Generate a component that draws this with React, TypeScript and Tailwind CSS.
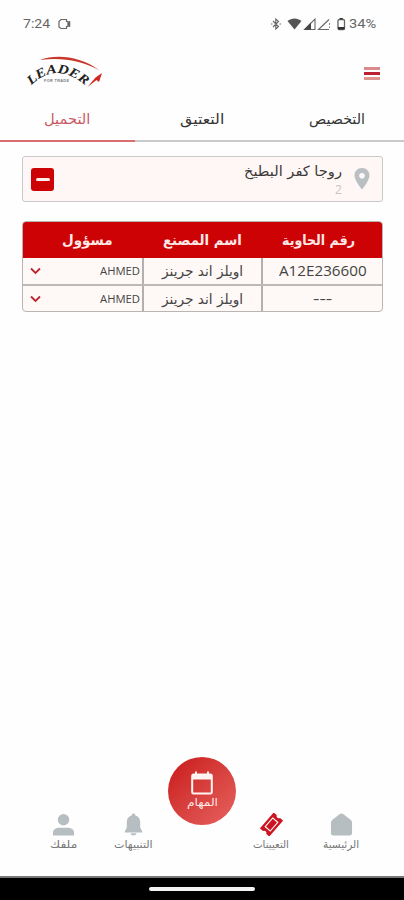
import { useLayoutEffect, useRef, useState } from "react";
import type { ReactNode } from "react";

/** One line of text, condensed or stretched to a fixed width. */
function Fit({ width, className = "", children }: { width: number; className?: string; children: ReactNode }) {
  const ref = useRef<HTMLSpanElement>(null);
  const [scale, setScale] = useState(1);
  useLayoutEffect(() => {
    if (ref.current) setScale(width / ref.current.offsetWidth);
  }, [width]);
  return (
    <span dir="ltr" className={`flex shrink-0 justify-start whitespace-nowrap ${className}`} style={{ width }}>
      <span ref={ref} dir="auto" className="block shrink-0 origin-left" style={{ transform: `scaleX(${scale})` }}>
        {children}
      </span>
    </span>
  );
}

function StatusBar() {
  return (
    <div className="flex h-12 items-center justify-between pl-[23px] pr-[28px] text-[#666]">
      <div className="flex items-center gap-[8px]">
        <Fit width={27} className="font-['Roboto',sans-serif] text-[13px] leading-4">7:24</Fit>
        <svg width="14" height="12" viewBox="0 0 14 12" fill="none" stroke="currentColor" strokeWidth="1.2">
          <path d="M3 1.500h5.500v2H10v5H8.500v2H3L1 9V3.500z" />
          <path d="M10 4.500l2-1.500v6l-2-1.500z" fill="currentColor" strokeWidth=".5" />
        </svg>
      </div>
      <div className="flex items-center gap-px">
        <svg width="78" height="14" viewBox="0 0 78 14" fill="none" stroke="currentColor">
          <path d="M3 4l5.500 5.500L5.800 12V2L8.500 4.500 3 10M1 7h1.500M9.500 7H11" strokeWidth="1.100" />
          <path d="M17.500 4C21.500 .5 27.500 .5 31.500 4L24.500 12.500z" fill="#555" stroke="none" />
          <path d="M34.500 12.500H45V2z" strokeWidth="1.100" />
          <path d="M34 12.800L41 5.500v7.300z" fill="#444" stroke="none" />
          <path d="M59 12.500H48.500L59 2.500" strokeWidth="1.100" />
          <path d="M59.500 6v2M59.500 9.500v1.500" strokeWidth=".8" />
          <rect x="68" y="2.500" width="6.500" height="10" rx="1.300" strokeWidth="1.300" />
          <path d="M69.700 1h3v1.500h-3zM68 10h6.500v2.500H68z" fill="#333" stroke="none" />
        </svg>
        <Fit width={27} className="font-['Roboto',sans-serif] text-[13px] leading-4">34%</Fit>
      </div>
    </div>
  );
}

function Header() {
  return (
    <header className="flex h-[52px] items-start justify-between pl-[22px] pr-[24px]">
      <svg width="84" height="44" viewBox="22 48 84 44" aria-label="LEADER">
        <defs>
          <path id="arc" d="M31 85.500Q57 60 87 87" />
        </defs>
        <path d="M40 60C55 54.500 79 55 99.500 70.500C80 60 62 57.500 40 60z" fill="#c9372c" />
        <path d="M102 73L99 82L96.500 80L87.500 87L95.500 77.500z" fill="#d2281f" />
        <text
          fontSize="13"
          className="font-['Liberation_Serif',serif] italic"
          fontWeight="700"
          fill="#222"
          textLength="61"
          lengthAdjust="spacingAndGlyphs"
        >
          <textPath href="#arc">LEADER</textPath>
        </text>
        <text x="44" y="81.500" fontSize="3.800" fontWeight="700" fill="#777" textLength="25" className="font-['Liberation_Sans',sans-serif]">
          FOR TRADE
        </text>
      </svg>
      <div className="mt-[19px] flex w-4 flex-col gap-[2px]">
        <div className="h-[3px] bg-[#d98a8a]" />
        <div className="h-[3px] bg-[#bd2031]" />
        <div className="h-[3px] bg-[#de948d]" />
      </div>
    </header>
  );
}

const tabs = [
  { name: "التخصيص", width: 56, active: false },
  { name: "التعتيق", width: 44, active: false },
  { name: "التحميل", width: 46, active: true },
];

function Tabs() {
  return (
    <nav className="grid h-[42px] grid-cols-3">
      {tabs.map((t) => (
        <div
          key={t.name}
          className={`flex justify-center border-b-2 pt-[9px] ${t.active ? "border-[#d86f6f] text-[#c85b65]" : "border-[#c9c9c9] text-[#333]"}`}
        >
          <Fit width={t.width} className="text-[14px] leading-5">{t.name}</Fit>
        </div>
      ))}
    </nav>
  );
}

function LocationCard() {
  return (
    <section className="mr-[21px] mt-[14px] flex h-[46px] w-[361px] items-center rounded-[3px] border border-[#c9c9c9] bg-[#fef7f5] pr-[12px] pl-[8px]">
      <svg width="16" height="22" viewBox="0 0 16 22" className="shrink-0">
        <path d="M8 0C3.500 0 .5 3.300.5 7.500C.5 12.500 8 21.500 8 21.500S15.500 12.500 15.500 7.500C15.500 3.300 12.500 0 8 0zM8 5a2.800 2.800 0 110 5.600A2.800 2.800 0 018 5z" fill="#b9bfc3" fillRule="evenodd" />
      </svg>
      <div className="mr-[12px] flex grow flex-col">
        <Fit width={98} className="text-[14px] leading-[22px] text-[#3c3838]">روجا كفر البطيخ</Fit>
        <Fit width={7} className="font-['Open_Sans',sans-serif] text-[12px] leading-[16px] text-[#c4c4c4]">2</Fit>
      </div>
      <div className="flex size-[23px] items-center justify-center rounded-[3px] bg-[#cc0205]">
        <div className="h-[3px] w-[14px] rounded-sm bg-[#fff0ee]" />
      </div>
    </section>
  );
}

function ContainerTable() {
  return (
    <section className="mr-[21px] mt-[19px] w-[361px] overflow-hidden rounded-[4px] border border-[#b9b5b5] bg-[#fef8f6]">
      <div className="grid h-[36px] grid-cols-[119px_121px_119px] items-center bg-[#cc0205] font-bold text-[#ffe9e6]">
        <div className="flex justify-center pr-[9px]"><Fit width={73} className="text-[14px] leading-6">رقم الحاوية</Fit></div>
        <div className="flex justify-center"><Fit width={79} className="text-[14px] leading-6">اسم المصنع</Fit></div>
        <div className="flex justify-center pl-[10px]"><Fit width={51} className="text-[14px] leading-6">مسؤول</Fit></div>
      </div>
      {["A12E236600", "---"].map((id, i) => (
        <div key={id} className={`grid grid-cols-[119px_121px_119px] text-[#444] ${i ? "h-[27px] border-t-2 border-[#bdb9b9]" : "h-[26px]"}`}>
          <div className="flex items-center justify-center">
            <Fit width={i ? 20 : 88} className="font-['Open_Sans',sans-serif] text-[14px] leading-5">{id}</Fit>
          </div>
          <div className="flex items-center justify-center border-x-2 border-[#b4b0b0]">
            <Fit width={81} className="text-[14px] leading-5">اويلز اند جرينز</Fit>
          </div>
          <div className="flex items-center justify-between pr-[2px] pl-[7px]">
            <Fit width={40} className="font-['Open_Sans',sans-serif] text-[11px] leading-5">AHMED</Fit>
            <svg width="11" height="8" viewBox="0 0 11 8" fill="none" stroke="#b92632" strokeWidth="1.800">
              <path d="M1 1.500l4.500 4.500L10 1.500" />
            </svg>
          </div>
        </div>
      ))}
    </section>
  );
}

function HomeIcon() {
  return <path d="M10 1.200Q12 0 14 1.200L21.500 7Q23 8.200 23 10V21Q23 23.500 20.500 23.500H3.500Q1 23.500 1 21V10Q1 8.200 2.500 7z" fill="#b7bec2" />;
}
function TicketIcon() {
  return (
    <g transform="rotate(-49 12 12)">
      <path d="M1 5.500H23V9.800A2.300 2.300 0 0023 14.200V18.500H1V14.200A2.300 2.300 0 001 9.800z" fill="#cb1420" />
      <rect x="6" y="8.500" width="12" height="7" fill="none" stroke="#fff" strokeWidth="1.200" />
    </g>
  );
}
function BellIcon() {
  return <path d="M12 .5a2 2 0 00-2 2C6.500 3.500 5 6.200 5 9.500V15L3 19v1.300h18V19l-2-4V9.500C19 6.200 17.500 3.500 14 2.500a2 2 0 00-2-2zM9 21h6a3 2.200 0 01-6 0z" fill="#b7bec2" />;
}
function PersonIcon() {
  return (
    <g fill="#b7bec2">
      <circle cx="12" cy="7" r="6" />
      <path d="M1 23.500V21C1 17 4 15.500 8 15.500h8c4 0 7 1.500 7 5.500v2.500z" />
    </g>
  );
}

const items = [
  { label: "الرئيسية", width: 36, Icon: HomeIcon },
  { label: "التعيينات", width: 36, Icon: TicketIcon },
  { label: "التنبيهات", width: 39, Icon: BellIcon },
  { label: "ملفك", width: 27, Icon: PersonIcon },
];

function NavItem({ label, width, Icon }: (typeof items)[number]) {
  return (
    <div className="flex w-[50px] flex-col items-center">
      <svg width="23" height="23" viewBox="0 0 24 24"><Icon /></svg>
      <Fit width={width} className="text-[10.500px] leading-4 text-[#777]">{label}</Fit>
    </div>
  );
}

function BottomNav() {
  return (
    <nav className="flex h-[119px] items-start justify-center">
      <div className="mt-[56px] flex gap-[20px]">
        <NavItem {...items[0]} />
        <NavItem {...items[1]} />
      </div>
      <div className="mx-[10px] flex size-[68px] flex-col items-center rounded-full bg-linear-to-br from-[#c80f16] to-[#e6605e] pt-[14px]">
        <svg width="22" height="24" viewBox="0 0 22 24" fill="none" stroke="#fff4f1">
          <rect x="1.200" y="3.500" width="19.600" height="19" rx="1.500" strokeWidth="2" />
          <path d="M1 6h20" strokeWidth="5" />
          <path d="M5 .5v4M17 .5v4" strokeWidth="2" />
        </svg>
        <Fit width={31} className="text-[11px] leading-4 text-[#ffe8e4]">المهام</Fit>
      </div>
      <div className="mt-[56px] flex gap-[20px]">
        <NavItem {...items[2]} />
        <NavItem {...items[3]} />
      </div>
    </nav>
  );
}

export default function App() {
  return (
    <main className="flex h-[900px] w-[404px] flex-col overflow-hidden bg-[#fefefe] font-['DejaVu_Sans','Noto_Sans',sans-serif]">
      <StatusBar />
      <Header />
      <div dir="rtl" className="flex grow flex-col">
        <Tabs />
        <LocationCard />
        <ContainerTable />
        <div className="grow" />
        <BottomNav />
      </div>
      <footer className="flex h-[24px] items-center justify-center border-t-2 border-[#777] bg-black">
        <div className="h-1 w-[106px] rounded-full bg-[#f4f4f4]" />
      </footer>
    </main>
  );
}
